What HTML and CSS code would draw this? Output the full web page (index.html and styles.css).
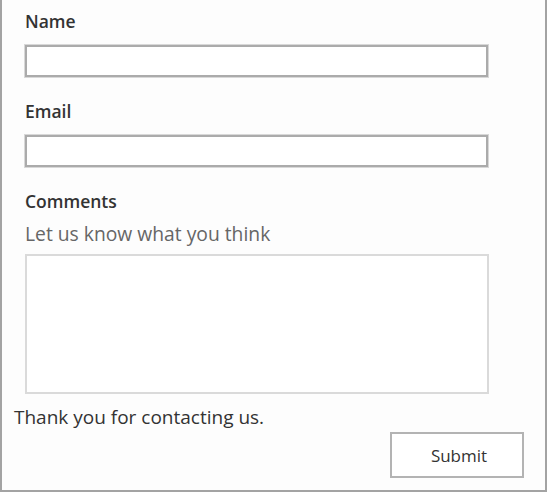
FILE: index.html
```html
<!DOCTYPE html>
<html>
<head>
<meta charset="utf-8">
<link rel="stylesheet" href="styles.css">
</head>
<body>
<div class="frame">
  <form class="form">
    <div class="field">
      <label class="label">Name</label>
      <input class="input" type="text">
    </div>
    <div class="field">
      <label class="label">Email</label>
      <input class="input" type="text">
    </div>
    <div class="field">
      <label class="label">Comments</label>
      <div class="hint">Let us know what you think</div>
      <textarea class="textarea"></textarea>
    </div>
  </form>
  <div class="thanks">Thank you for contacting us.</div>
  <div class="actions">
    <button class="submit" type="button">Submit</button>
  </div>
</div>
</body>
</html>
```
FILE: styles.css
```css
html, body {
  margin: 0;
  padding: 0;
  background: #ffffff;
}
body {
  font-family: "Open Sans", "Noto Sans", sans-serif;
  color: #333333;
}
.frame {
  width: 547px;
  height: 492px;
  box-sizing: border-box;
  border: 2px solid #a3a3a3;
  border-top: none;
  background: #fdfdfd;
  display: flex;
  flex-direction: column;
}
.form {
  padding: 9px 0 0 23px;
  margin: 0;
}
.field {
  display: flex;
  flex-direction: column;
}
.label {
  font-size: 17.5px;
  font-weight: 600;
  line-height: 24px;
  height: 24px;
  color: #333;
}
.input {
  margin: 12px 0 22px 0;
  width: 463px;
  height: 32px;
  box-sizing: border-box;
  border: 2px solid #ababab;
  box-shadow: 0 0 0 1px #d8d8d8;
  background: #fff;
  padding: 0;
}
.hint {
  margin-top: 9px;
  font-size: 19.3px;
  line-height: 24px;
  color: #666;
}
.textarea {
  margin: 8px 0 0 0;
  width: 464px;
  height: 140px;
  box-sizing: border-box;
  border: 2px solid #dadada;
  background: #fff;
  resize: none;
  padding: 0;
}
.thanks {
  margin: 11px 0 0 12px;
  font-size: 19px;
  line-height: 24px;
  color: #333;
}
.actions {
  display: flex;
  justify-content: flex-end;
  padding-right: 21px;
  margin-top: 3px;
}
.submit {
  width: 134px;
  height: 46px;
  box-sizing: border-box;
  border: 2px solid #b3b3b3;
  background: #fff;
  font-family: "Open Sans", "Noto Sans", sans-serif;
  font-size: 17px;
  color: #333;
  padding: 0 0 0 4px;
}
```
